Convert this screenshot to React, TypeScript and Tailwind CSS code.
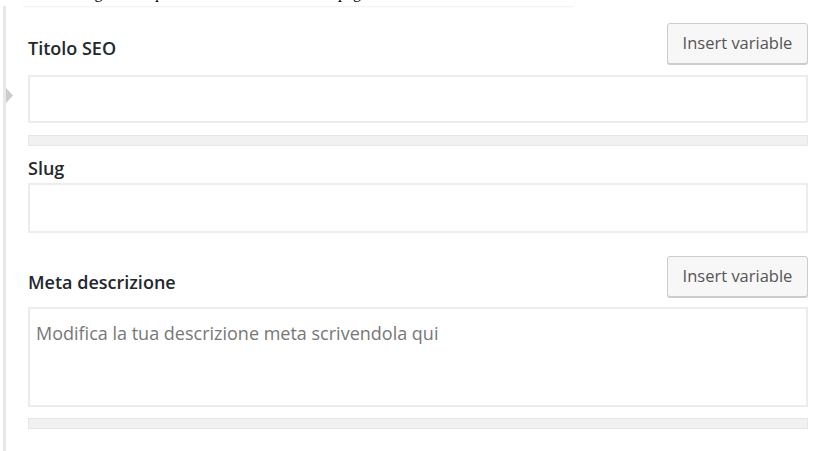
import React from "react"

// Yoast-style SEO snippet editor fields

function InsertButton() {
  return (
    <button
      type="button"
      className="h-[41px] w-[141px] shrink-0 rounded-[3px] border border-[#cccccc] bg-[#f7f7f7] text-center text-[16.5px] text-[#555555] shadow-[0_1px_0_#cccccc]"
    >
      Insert variable
    </button>
  )
}

function Progress() {
  return <div className="h-[11px] w-full border border-[#e6e6e6] bg-[#f1f1f1]" />
}

export default function App() {
  return (
    <div
      className="relative h-[451px] w-[823px] overflow-hidden bg-white"
      style={{ fontFamily: "'Open Sans', 'Noto Sans', sans-serif" }}
    >
      {/* cut-off notice line at the top */}
      <div className="ml-[24px] mr-[248px] h-[6px] overflow-hidden shadow-[0_1px_2px_rgba(0,0,0,0.06)]">
        <p className="-mt-[17px] whitespace-nowrap pl-[30px] text-[16px] leading-[20px] text-black [font-family:'Liberation_Serif',serif]">
          Nel seguente riquadro modifica come la tua pagina o il tuo articolo sarà mostrato nel plugin
        </p>
      </div>

      <div className="flex">
        {/* left rail with arrow */}
        <div className="relative ml-[3px] h-[445px] w-[3px] bg-[#e8e8e8]">
          <svg
            className="absolute left-[3px] top-[82px]"
            width="7"
            height="15"
            viewBox="0 0 7 15"
          >
            <path d="M0 0 L7 7.5 L0 15 Z" fill="#cccccc" />
          </svg>
        </div>

        <div className="ml-[22px] mr-[15px] flex-1 text-[#23282d]">
          {/* Titolo SEO */}
          <div className="mt-[17px] flex items-start justify-between">
            <label className="mt-[13px] text-[18px] font-semibold leading-[24px]">Titolo SEO</label>
            <InsertButton />
          </div>
          <div className="mt-[11px] h-[48px] border-2 border-[#ececec]" />
          <div className="mt-[12px]">
            <Progress />
          </div>

          {/* Slug */}
          <label className="mt-[10px] block text-[18px] font-semibold leading-[24px]">Slug</label>
          <div className="mt-[3px] h-[50px] border-2 border-[#ececec]" />

          {/* Meta descrizione */}
          <div className="mt-[23px] flex items-start justify-between">
            <label className="mt-[14px] text-[18px] font-semibold leading-[24px]">Meta descrizione</label>
            <InsertButton />
          </div>
          <div className="mt-[10px] h-[100px] border-2 border-[#ececec] pl-[6px] pt-[12px] text-[18px] leading-[24px] text-[#777777]">
            Modifica la tua descrizione meta scrivendola qui
          </div>
          <div className="mt-[11px]">
            <Progress />
          </div>
        </div>
      </div>
    </div>
  )
}
